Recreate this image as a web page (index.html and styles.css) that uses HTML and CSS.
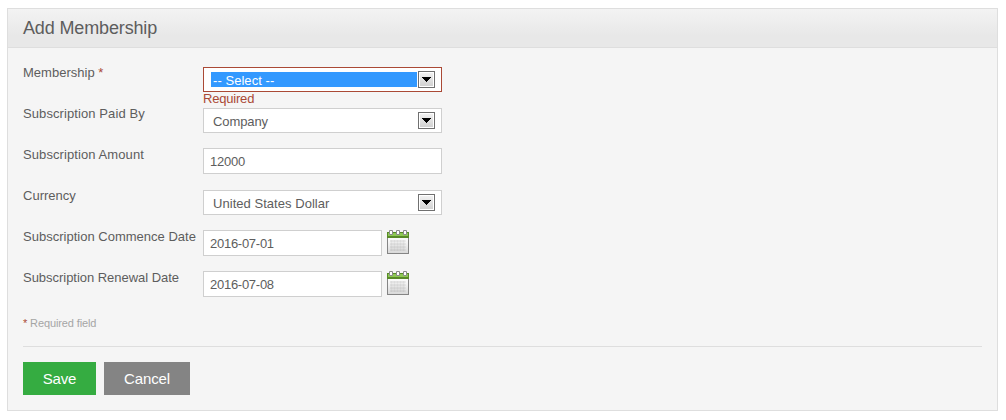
FILE: index.html
```html
<!DOCTYPE html>
<html lang="en">
<head>
<meta charset="utf-8">
<title>Add Membership</title>
<link rel="stylesheet" href="styles.css">
</head>
<body>
<svg class="defs" width="0" height="0" aria-hidden="true">
  <defs>
    <linearGradient id="page" x1="0" y1="0" x2="0" y2="1"><stop offset="0" stop-color="#fff"/><stop offset=".4" stop-color="#f8f8f8"/><stop offset="1" stop-color="#d8d8d8"/></linearGradient>
    <symbol id="calendar" viewBox="0 0 22 24">
      <rect x=".5" y="2.500" width="21" height="21" fill="url(#page)" stroke="#858585"/>
      <path d="M0 2h22v6H0z" fill="#588a28"/>
      <path d="M1 3h20v3H1z" fill="#8dc853"/>
      <path d="M3 10h16v2H3zM3 13h16v2H3zM3 16h16v2H3zM3 19h16v2H3z" fill="#888" opacity=".1"/>
      <path d="M4.500 10v11M7.500 10v11M10.500 10v11M13.500 10v11M16.500 10v11" stroke="#888" stroke-width="2" opacity=".14"/>
      <path d="M2.500 .5h3v4h-3zM9.500 .5h3v4h-3zM16.500 .5h3v4h-3z" fill="#fff" stroke="#8a8a8a"/>
    </symbol>
    <symbol id="arrow" viewBox="0 0 9 5"><path d="M0 0h9v1H8v1H7v1H6v1H5v1H4V4H3V3H2V2H1V1H0z"/></symbol>
  </defs>
</svg>
<main class="panel">
  <header class="head"><h1 class="title">Add Membership</h1></header>
  <form class="form">
    <div class="row"><label class="label">Membership <em class="star">*</em></label>
      <div class="field pick"><div class="select invalid"><span class="value selected">-- Select --</span><span class="drop"><svg width="9" height="5"><use href="#arrow"/></svg></span></div><span class="error">Required</span></div></div>
    <div class="row"><label class="label loose">Subscription Paid By</label>
      <div class="field pick"><div class="select"><span class="value company">Company</span><span class="drop"><svg width="9" height="5"><use href="#arrow"/></svg></span></div></div></div>
    <div class="row"><label class="label loose">Subscription Amount</label>
      <div class="field"><div class="input amount">12000</div></div></div>
    <div class="row"><label class="label">Currency</label>
      <div class="field pick"><div class="select"><span class="value country">United States Dollar</span><span class="drop"><svg width="9" height="5"><use href="#arrow"/></svg></span></div></div></div>
    <div class="row"><label class="label">Subscription Commence Date</label>
      <div class="field dated"><div class="input date">2016-07-01</div><svg width="22" height="24"><use href="#calendar"/></svg></div></div>
    <div class="row"><label class="label renewal">Subscription Renewal Date</label>
      <div class="field dated"><div class="input date">2016-07-08</div><svg width="22" height="24"><use href="#calendar"/></svg></div></div>
    <p class="note"><em class="star">*</em> Required field</p>
    <div class="actions"><button type="button" class="btn save">Save</button><button type="button" class="btn cancel">Cancel</button></div>
  </form>
</main>
</body>
</html>
```
FILE: styles.css
```css
* { box-sizing: border-box; }
body { margin: 0; padding: 8px 8px 0 7px; background: #fff; color: #5d5d5d; font: 13px/15px "Liberation Sans", Arial, sans-serif; }
svg { display: block; }
.defs { height: 0; }
.panel { height: 403px; border: 1px solid #dedede; background: #f5f5f5; }
.head { height: 39px; padding: 8px 15px 0; border-bottom: 1px solid #dedede; background: linear-gradient(#f3f3f3, #e8e8e8 70%); }
.title { margin: 0; font-size: 18px; line-height: 22px; font-weight: normal; letter-spacing: -.14px; }
.form { padding: 18px 15px 0; }
.row { display: flex; height: 41px; }
.label { width: 180px; margin-top: -1px; white-space: nowrap; letter-spacing: .01px; }
.loose { letter-spacing: .09px; }
.renewal { letter-spacing: -.03px; }
.star { color: #aa4935; font-style: normal; }
.field { width: 239px; }
.pick { padding-top: 1px; }
.select { display: flex; align-items: center; height: 25px; padding: 0 6px 0 7px; border: 1px solid #cfcfcf; background: #fff; }
.invalid { border-color: #aa4935; }
.value { flex: 1; height: 15px; margin-right: 1px; padding-left: 2px; line-height: 17px; }
.company { letter-spacing: -.1px; }
.country { letter-spacing: .04px; }
.selected { background: #39f; color: #fff; letter-spacing: .05px; }
.drop { display: flex; align-items: center; justify-content: center; width: 17px; height: 17px; border: 1px solid #707070; background: linear-gradient(#f3f3f3, #cfcfcf); box-shadow: inset 0 0 0 1px #fff; }
.error { display: block; color: #aa4935; line-height: 14px; letter-spacing: -.2px; }
.input { height: 26px; padding-left: 6px; border: 1px solid #cfcfcf; background: #fff; line-height: 26px; }
.amount { letter-spacing: -.2px; }
.dated { display: flex; gap: 5px; }
.date { width: 179px; letter-spacing: -.27px; }
.note { height: 35px; margin: 0; padding-top: 4px; border-bottom: 1px solid #dedede; color: #a5a5a5; font-size: 11px; line-height: 14px; letter-spacing: -.12px; }
.actions { display: flex; gap: 8px; padding-top: 15px; }
.btn { height: 33px; padding: 0; border: 0; color: #fff; font: 15px/33px "Liberation Sans", Arial, sans-serif; }
.save { width: 73px; background: #35ac41; letter-spacing: -.2px; }
.cancel { width: 86px; background: #848484; letter-spacing: -.1px; }
```
